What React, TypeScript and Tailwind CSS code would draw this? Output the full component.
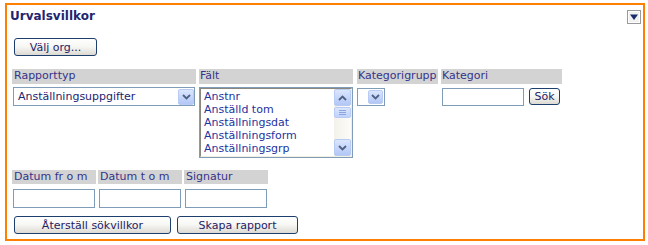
import React from "react";

function Chevron({ up = false }: { up?: boolean }) {
  return (
    <svg width="9" height="6" viewBox="0 0 9 6">
      <path
        d={up ? "M1 5 L4.5 1.5 L8 5" : "M1 1 L4.5 4.5 L8 1"}
        stroke="#4d6185"
        strokeWidth="1.8"
        fill="none"
      />
    </svg>
  );
}

function BlueBtn({ className = "", up = false }: { className?: string; up?: boolean }) {
  return (
    <div
      className={
        "flex items-center justify-center rounded-[2px] border border-[#b7cbf5] bg-linear-to-b from-[#dbe6fe] to-[#b3c7f6] " +
        className
      }
    >
      <Chevron up={up} />
    </div>
  );
}

function Toggle() {
  return (
    <svg width="14" height="14" viewBox="0 0 14 14">
      <rect x="0" y="0" width="14" height="14" fill="#9a9a9a" />
      <rect x="1" y="1" width="12" height="12" fill="#ffffff" />
      <rect x="2" y="2" width="10" height="10" fill="#f2f2f2" />
      <path d="M3 4.5 L11 4.5 L7 10 Z" fill="#1b2a6b" />
    </svg>
  );
}

function Btn({ className = "", children }: { className?: string; children: React.ReactNode }) {
  return (
    <div
      className={
        "flex items-center justify-center rounded-[3px] border border-[#1c3f6e] bg-linear-to-b from-[#ffffff] via-[#f6f6f3] to-[#dcdad2] text-[#1e2266] " +
        className
      }
    >
      {children}
    </div>
  );
}

export default function App() {
  const items = ["Anstnr", "Anställd tom", "Anställningsdat", "Anställningsform", "Anställningsgrp"];
  return (
    <div className="w-[648px] h-[245px] bg-white pt-[3px] pl-[5px] font-['DejaVu_Sans',Verdana,sans-serif] text-[11px] leading-[13px]">
      <div className="w-[640px] h-[238px] border-2 border-[#ff7f00] flex flex-col">
        <div className="flex justify-between items-start h-[19px] pt-[5px] pl-[3px] pr-[2px]">
          <span className="font-bold text-[12px] leading-[13px] text-[#1f2670]">Urvalsvillkor</span>
          <Toggle />
        </div>
        <div className="pl-[5px] flex flex-col">
          <Btn className="ml-[2px] mt-[14px] w-[83px] h-[18px]">Välj org...</Btn>

          <div className="flex mt-[13px] h-[15px] text-[#34348a]">
            <div className="w-[184px] bg-[#d3d3d3] pl-[2px]">Rapporttyp</div>
            <div className="ml-[3px] w-[154px] bg-[#d3d3d3] pl-[1px]">Fält</div>
            <div className="ml-[4px] w-[81px] bg-[#d3d3d3] pl-[1px]">Kategorigrupp</div>
            <div className="ml-[3px] w-[121px] bg-[#d3d3d3] pl-[1px]">Kategori</div>
          </div>

          <div className="flex items-start mt-[3px]">
            <div className="w-[184px]">
              <div className="ml-[1px] w-[182px] h-[19px] border border-[#7f9db9] bg-white flex items-center justify-between text-[#1d2470]">
                <span className="pl-[4px]">Anställningsuppgifter</span>
                <BlueBtn className="w-[16px] h-[16px] mr-[0px]" />
              </div>
            </div>
            <div className="ml-[3px] w-[154px] h-[71px] border border-[#7f9db9] bg-white">
              <div className="w-full h-full border-t border-l border-[#8a887c] border-r-[#f1efe2] border-b-[#f1efe2] border-r border-b flex">
                <div className="flex-1 pl-[3px] pt-[1px] text-[#2233a0] overflow-hidden">
                  {items.map((t) => (
                    <div key={t} className="h-[13px] whitespace-nowrap">
                      {t}
                    </div>
                  ))}
                </div>
                <div className="w-[17px] h-full flex flex-col justify-between bg-linear-to-r from-[#f3f1ea] to-[#fdfcf8]">
                  <div className="flex flex-col">
                    <BlueBtn up className="w-[17px] h-[17px]" />
                    <div className="mt-[1px] w-[17px] h-[11px] rounded-[2px] border border-[#b7cbf5] bg-linear-to-b from-[#dbe6fe] to-[#c0d2fa] flex flex-col items-center justify-center gap-[1px]">
                      <div className="w-[7px] h-[1px] bg-[#8ea6e0]" />
                      <div className="w-[7px] h-[1px] bg-[#8ea6e0]" />
                      <div className="w-[7px] h-[1px] bg-[#8ea6e0]" />
                    </div>
                  </div>
                  <BlueBtn className="w-[17px] h-[17px]" />
                </div>
              </div>
            </div>
            <div className="ml-[4px] w-[81px]">
              <div className="mt-[1px] w-[28px] h-[18px] border border-[#7f9db9] bg-white flex items-center justify-end">
                <BlueBtn className="w-[15px] h-[14px] mr-[1px]" />
              </div>
            </div>
            <div className="ml-[3px] w-[121px] flex items-start">
              <div className="ml-[1px] mt-[1px] w-[82px] h-[18px] border border-[#7f9db9] bg-white" />
              <Btn className="ml-[5px] mt-[1px] w-[31px] h-[17px]">Sök</Btn>
            </div>
          </div>

          <div className="flex gap-[2px] mt-[12px] h-[14px] text-[#34348a]">
            <div className="w-[84px] bg-[#d3d3d3] pl-[2px]">Datum fr o m</div>
            <div className="w-[84px] bg-[#d3d3d3] pl-[2px]">Datum t o m</div>
            <div className="w-[84px] bg-[#d3d3d3] pl-[2px]">Signatur</div>
          </div>
          <div className="flex gap-[2px] mt-[5px]">
            <div className="w-[84px]">
              <div className="ml-[1px] w-[82px] h-[19px] border border-[#7f9db9] bg-white" />
            </div>
            <div className="w-[84px]">
              <div className="ml-[1px] w-[82px] h-[19px] border border-[#7f9db9] bg-white" />
            </div>
            <div className="w-[84px]">
              <div className="ml-[1px] w-[82px] h-[19px] border border-[#7f9db9] bg-white" />
            </div>
          </div>
          <div className="flex mt-[8px]">
            <Btn className="ml-[2px] w-[157px] h-[18px]">Återställ sökvillkor</Btn>
            <Btn className="ml-[6px] w-[121px] h-[18px]">Skapa rapport</Btn>
          </div>
        </div>
      </div>
    </div>
  );
}
